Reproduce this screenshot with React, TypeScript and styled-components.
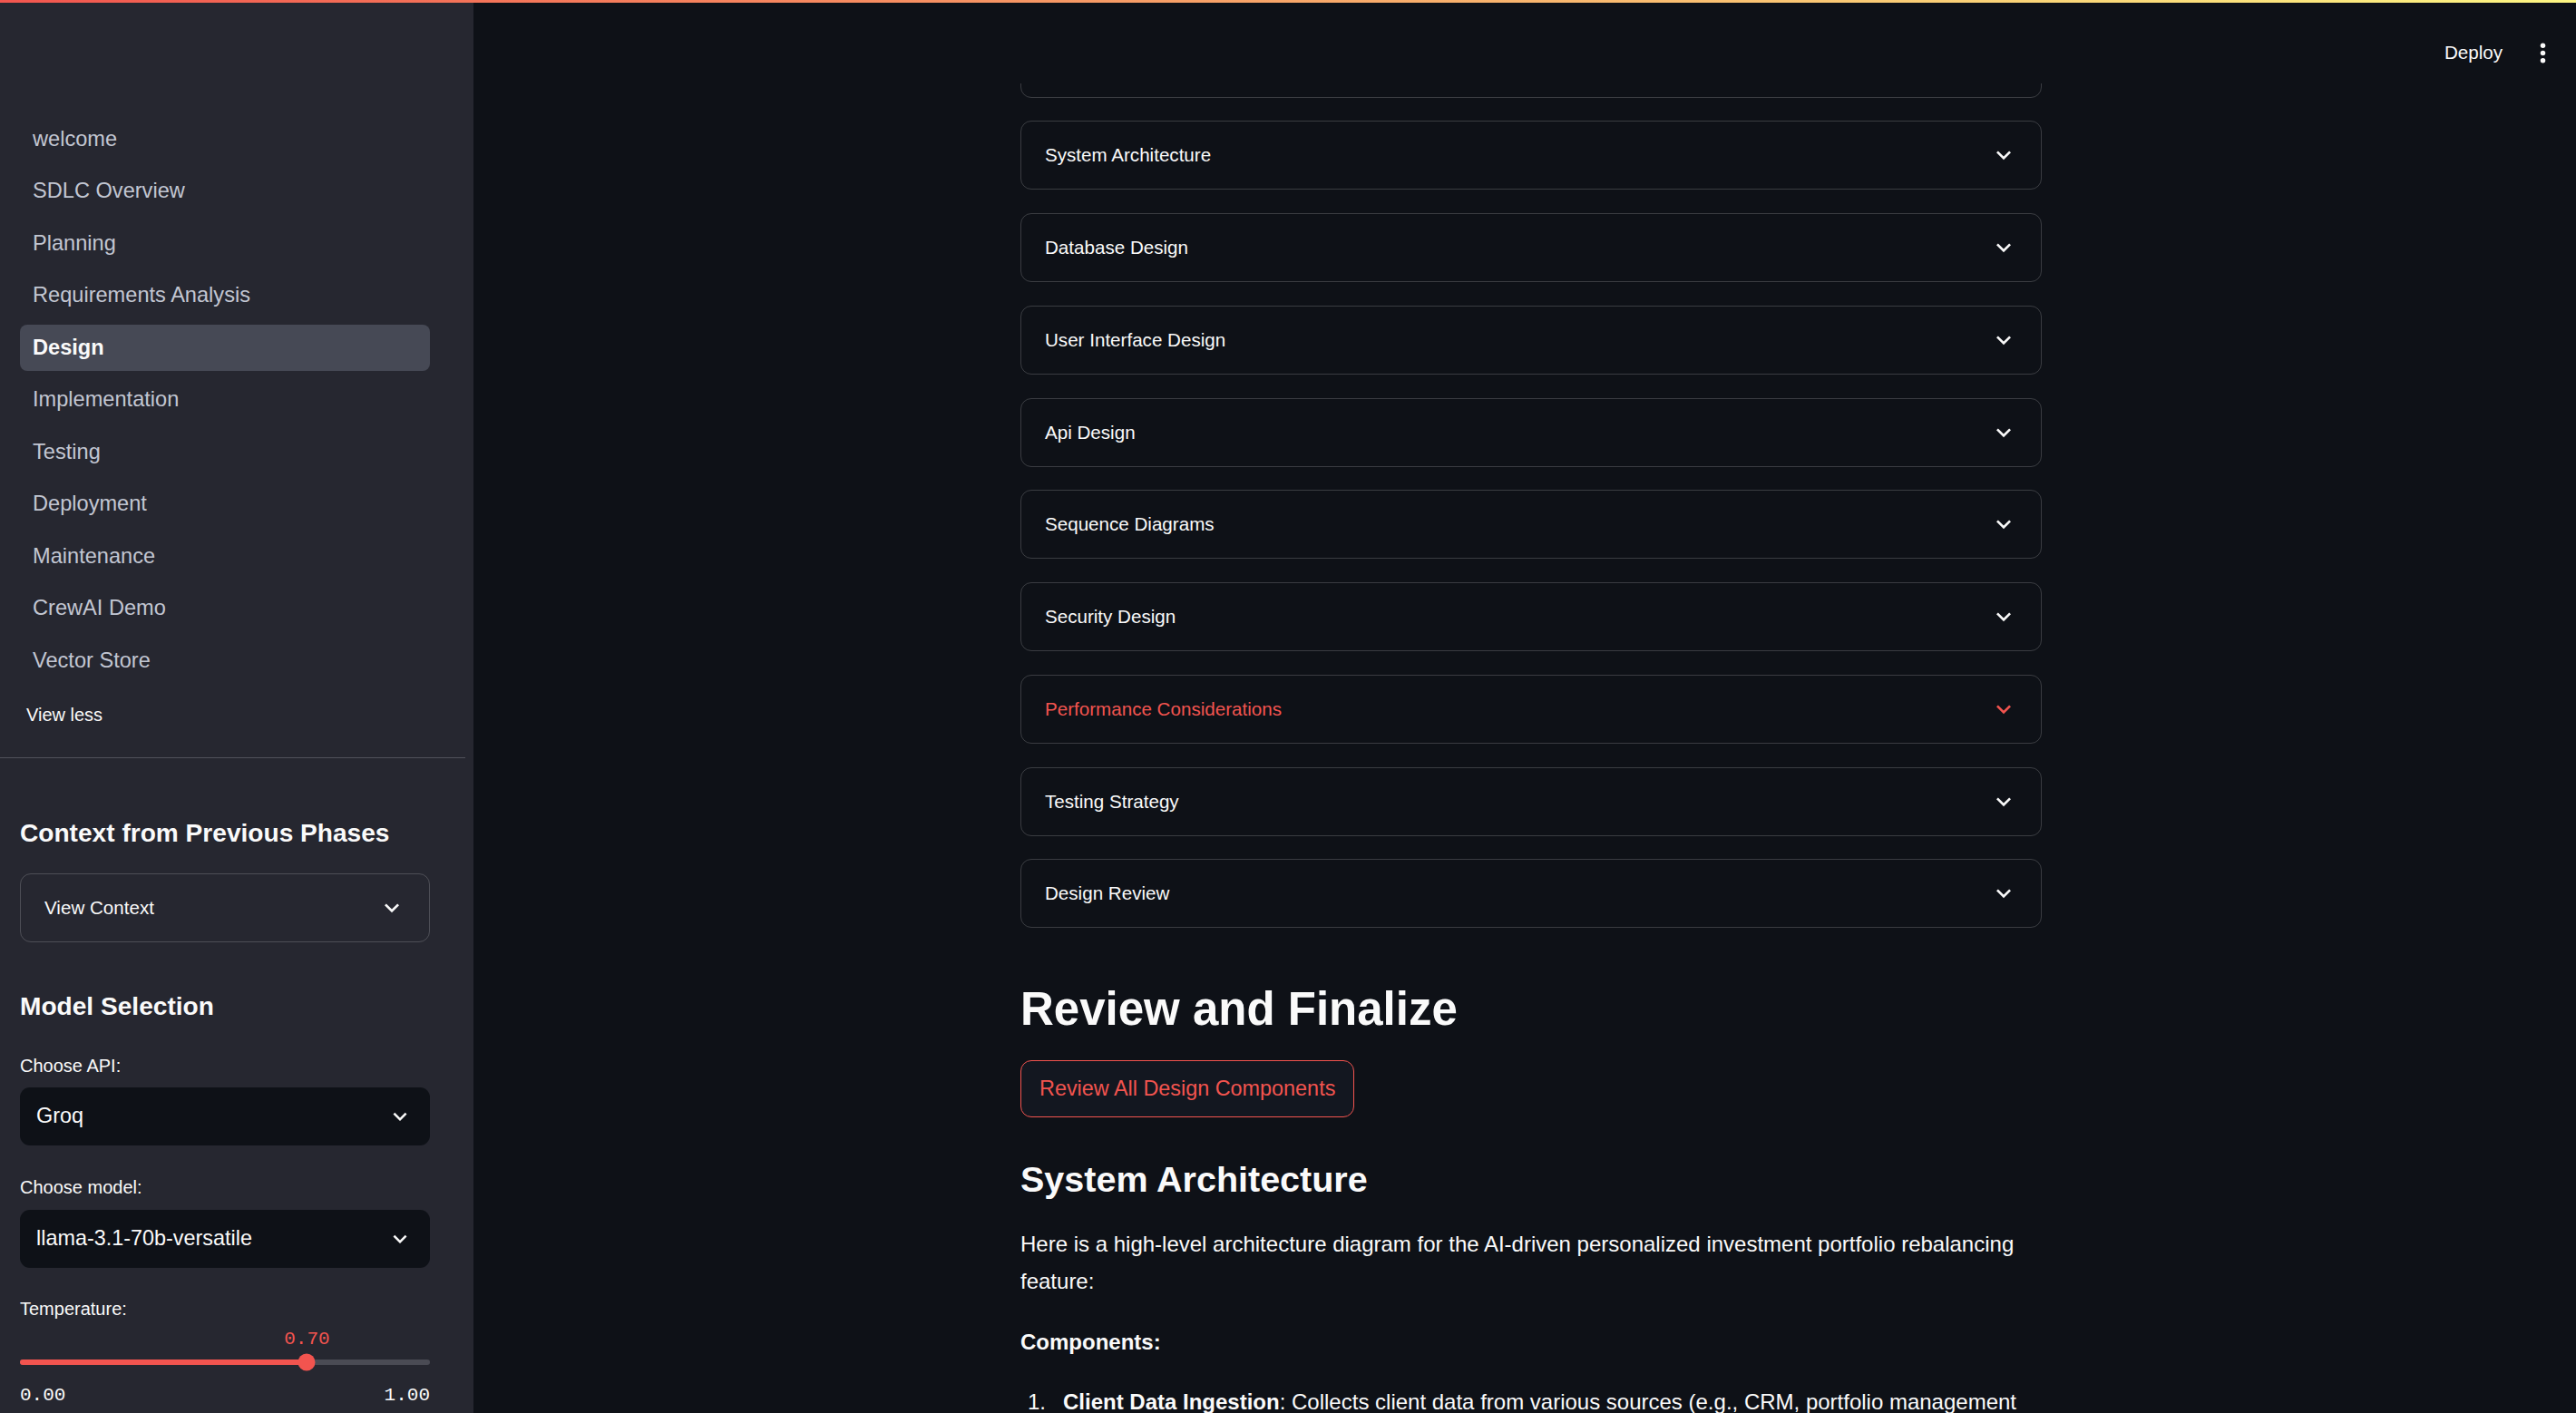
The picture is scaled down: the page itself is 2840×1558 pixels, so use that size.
import React from 'react';
import styled, { createGlobalStyle } from 'styled-components';

const RED = '#f2544f';

const GlobalStyle = createGlobalStyle`
  html, body {
    margin: 0;
    padding: 0;
    background: #0e1117;
    overflow: hidden;
  }
  body {
    font-family: "Liberation Sans", Arial, sans-serif;
    color: #fafafa;
  }
  #root {
    width: 2840px;
    height: 1558px;
  }
`;

const Shell = styled.div`
  position: relative;
  display: flex;
  width: 2840px;
  height: 1558px;
  overflow: hidden;
`;

const TopStripe = styled.div`
  position: absolute;
  top: 0;
  left: 0;
  right: 0;
  height: 3px;
  background: linear-gradient(90deg, #f2564f, #fdf683);
  z-index: 10;
`;

const Sidebar = styled.aside`
  flex: none;
  width: 522px;
  box-sizing: border-box;
  padding: 0 48px 0 22px;
  background: #262730;
  display: flex;
  flex-direction: column;

  & > * {
    flex-shrink: 0;
  }
`;

const NavList = styled.nav`
  display: flex;
  flex-direction: column;
  gap: 6.3px;
  padding-top: 127.9px;
`;

const NavLink = styled.div<{ $active?: boolean }>`
  height: 51.2px;
  display: flex;
  align-items: center;
  padding-left: 14px;
  border-radius: 8px;
  font-size: 23.6px;
  font-weight: ${(p) => (p.$active ? 700 : 400)};
  color: ${(p) => (p.$active ? '#fafafa' : '#c2c6d2')};
  background: ${(p) => (p.$active ? '#464955' : 'transparent')};
`;

const ViewLess = styled.div`
  margin: 21.9px 0 0 7px;
  font-size: 20px;
  line-height: 24px;
  color: #fafafa;
`;

const Divider = styled.div`
  margin: 35px -39px 0 -22px;
  height: 1px;
  background: #50515a;
`;

const SideHeading = styled.div<{ $gap: number }>`
  margin-top: ${(p) => p.$gap}px;
  font-size: 28.1px;
  font-weight: 700;
  line-height: 1.2;
  color: #fafafa;
`;

const Expander = styled.div<{ $gap?: number; $hot?: boolean }>`
  margin-top: ${(p) => p.$gap ?? 0}px;
  flex: none;
  height: 76px;
  box-sizing: border-box;
  border: 1px solid rgba(250, 250, 250, 0.19);
  border-radius: 12px;
  display: flex;
  align-items: center;
  justify-content: space-between;
  padding: 0 25px 0 26px;
  font-size: 20.6px;
  color: ${(p) => (p.$hot ? RED : '#fafafa')};
`;

const FieldLabel = styled.div<{ $gap: number }>`
  margin-top: ${(p) => p.$gap}px;
  font-size: 20px;
  line-height: 24px;
  color: #fafafa;
`;

const Select = styled.div<{ $gap: number }>`
  margin-top: ${(p) => p.$gap}px;
  height: 64px;
  box-sizing: border-box;
  border-radius: 11px;
  background: #0e1117;
  display: flex;
  align-items: center;
  justify-content: space-between;
  padding: 0 18px;
  font-size: 23.4px;
  color: #fafafa;
`;

const SliderValueRow = styled.div`
  position: relative;
  height: 24px;
  margin-top: 9.4px;
`;

const SliderValue = styled.span`
  position: absolute;
  top: 0;
  transform: translateX(-50%);
  font-family: "Liberation Mono", "DejaVu Sans Mono", monospace;
  font-size: 21px;
  line-height: 24px;
  color: ${RED};
`;

const Track = styled.div`
  position: relative;
  height: 6px;
  margin-top: 10.7px;
  border-radius: 3px;
  background: #4a4b54;
`;

const TrackFill = styled.div`
  height: 100%;
  border-radius: 3px;
  background: ${RED};
`;

const Thumb = styled.div`
  position: absolute;
  top: 50%;
  width: 19px;
  height: 19px;
  border-radius: 50%;
  background: ${RED};
  transform: translate(-50%, -50%);
`;

const SliderLimits = styled.div`
  display: flex;
  justify-content: space-between;
  margin-top: 21.3px;
  font-family: "Liberation Mono", "DejaVu Sans Mono", monospace;
  font-size: 21px;
  line-height: 24px;
  color: #fafafa;
`;

const Main = styled.main`
  position: relative;
  flex: 1;
  overflow: hidden;
  display: flex;
  align-items: flex-start;
  justify-content: center;
  padding-left: 14px;
`;

const Header = styled.header`
  position: absolute;
  top: 0;
  left: 0;
  right: 0;
  height: 92px;
  box-sizing: border-box;
  padding: 24px 20px 0 0;
  background: #0e1117;
  display: flex;
  align-items: center;
  justify-content: flex-end;
  gap: 28px;
  z-index: 2;
`;

const DeployButton = styled.span`
  font-size: 20.6px;
  color: #fafafa;
`;

const Content = styled.div`
  flex: none;
  width: 1126px;
  padding-top: 31.5px;
  display: flex;
  flex-direction: column;

  & > * {
    flex-shrink: 0;
  }
`;

const AccordionStack = styled.div`
  display: flex;
  flex-direction: column;
  gap: 25.75px;
`;

const Title = styled.h2`
  margin: 58.7px 0 0;
  font-size: 51px;
  font-weight: 700;
  line-height: 1.2;
  color: #fafafa;
`;

const ReviewButton = styled.button`
  margin-top: 26px;
  align-self: flex-start;
  height: 63px;
  padding: 0 20px;
  border: 1px solid ${RED};
  border-radius: 12px;
  background: #131720;
  color: ${RED};
  font-family: inherit;
  font-size: 23.4px;
`;

const Subtitle = styled.h3`
  margin: 44.7px 0 0;
  font-size: 39.5px;
  font-weight: 700;
  line-height: 1.2;
  color: #fafafa;
`;

const Para = styled.p<{ $gap: number }>`
  margin: ${(p) => p.$gap}px 0 0;
  font-size: 24px;
  line-height: 41px;
  color: #fafafa;
`;

const ListRow = styled.div`
  display: flex;
  margin-top: 25px;
  font-size: 24px;
  line-height: 41px;
  color: #fafafa;
`;

const ListNo = styled.span`
  flex: none;
  width: 39px;
  padding-left: 8px;
`;

const ChevronDown = ({ size = 32, color = 'currentColor' }: { size?: number; color?: string }) => (
  <svg width={size} height={size} viewBox="0 0 24 24" fill={color}>
    <path d="M16.59 8.59L12 13.17 7.41 8.59 6 10l6 6 6-6z" />
  </svg>
);

const MoreVert = () => (
  <svg width={33} height={33} viewBox="0 0 24 24" fill="#fafafa">
    <circle cx="12" cy="6" r="2" />
    <circle cx="12" cy="12" r="2" />
    <circle cx="12" cy="18" r="2" />
  </svg>
);

const pages = [
  'welcome',
  'SDLC Overview',
  'Planning',
  'Requirements Analysis',
  'Design',
  'Implementation',
  'Testing',
  'Deployment',
  'Maintenance',
  'CrewAI Demo',
  'Vector Store',
];

const sections = [
  '',
  'System Architecture',
  'Database Design',
  'User Interface Design',
  'Api Design',
  'Sequence Diagrams',
  'Security Design',
  'Performance Considerations',
  'Testing Strategy',
  'Design Review',
];

const temperature = 0.7;

const App: React.FC = () => {
  return (
    <>
      <GlobalStyle />
      <Shell>
        <TopStripe />
        <Sidebar>
          <NavList>
            {pages.map((p) => (
              <NavLink key={p} $active={p === 'Design'}>
                {p}
              </NavLink>
            ))}
          </NavList>
          <ViewLess>View less</ViewLess>
          <Divider />

          <SideHeading $gap={66}>Context from Previous Phases</SideHeading>
          <Expander $gap={27.8}>
            <span>View Context</span>
            <ChevronDown />
          </Expander>

          <SideHeading $gap={54}>Model Selection</SideHeading>
          <FieldLabel $gap={36.4}>Choose API:</FieldLabel>
          <Select $gap={11.4}>
            <span>Groq</span>
            <ChevronDown size={30} />
          </Select>
          <FieldLabel $gap={34.6}>Choose model:</FieldLabel>
          <Select $gap={12.4}>
            <span>llama-3.1-70b-versatile</span>
            <ChevronDown size={30} />
          </Select>
          <FieldLabel $gap={33.6}>Temperature:</FieldLabel>
          <SliderValueRow>
            <SliderValue style={{ left: `${temperature * 100}%` }}>0.70</SliderValue>
          </SliderValueRow>
          <Track>
            <TrackFill style={{ width: `${temperature * 100}%` }} />
            <Thumb style={{ left: `${temperature * 100}%` }} />
          </Track>
          <SliderLimits>
            <span>0.00</span>
            <span>1.00</span>
          </SliderLimits>
        </Sidebar>

        <Main>
          <Header>
            <DeployButton>Deploy</DeployButton>
            <MoreVert />
          </Header>
          <Content>
            <AccordionStack>
              {sections.map((s, i) => {
                const hot = s === 'Performance Considerations';
                return (
                  <Expander key={i} $hot={hot}>
                    <span>{s}</span>
                    <ChevronDown />
                  </Expander>
                );
              })}
            </AccordionStack>

            <Title>Review and Finalize</Title>
            <ReviewButton>Review All Design Components</ReviewButton>

            <Subtitle>System Architecture</Subtitle>
            <Para $gap={27}>
              Here is a high-level architecture diagram for the AI-driven personalized investment
              portfolio rebalancing feature:
            </Para>
            <Para $gap={26}>
              <strong>Components:</strong>
            </Para>
            <ListRow>
              <ListNo>1.</ListNo>
              <span>
                <strong>Client Data Ingestion</strong>: Collects client data from various sources
                (e.g., CRM, portfolio management systems).
              </span>
            </ListRow>
          </Content>
        </Main>
      </Shell>
    </>
  );
};

export default App;
